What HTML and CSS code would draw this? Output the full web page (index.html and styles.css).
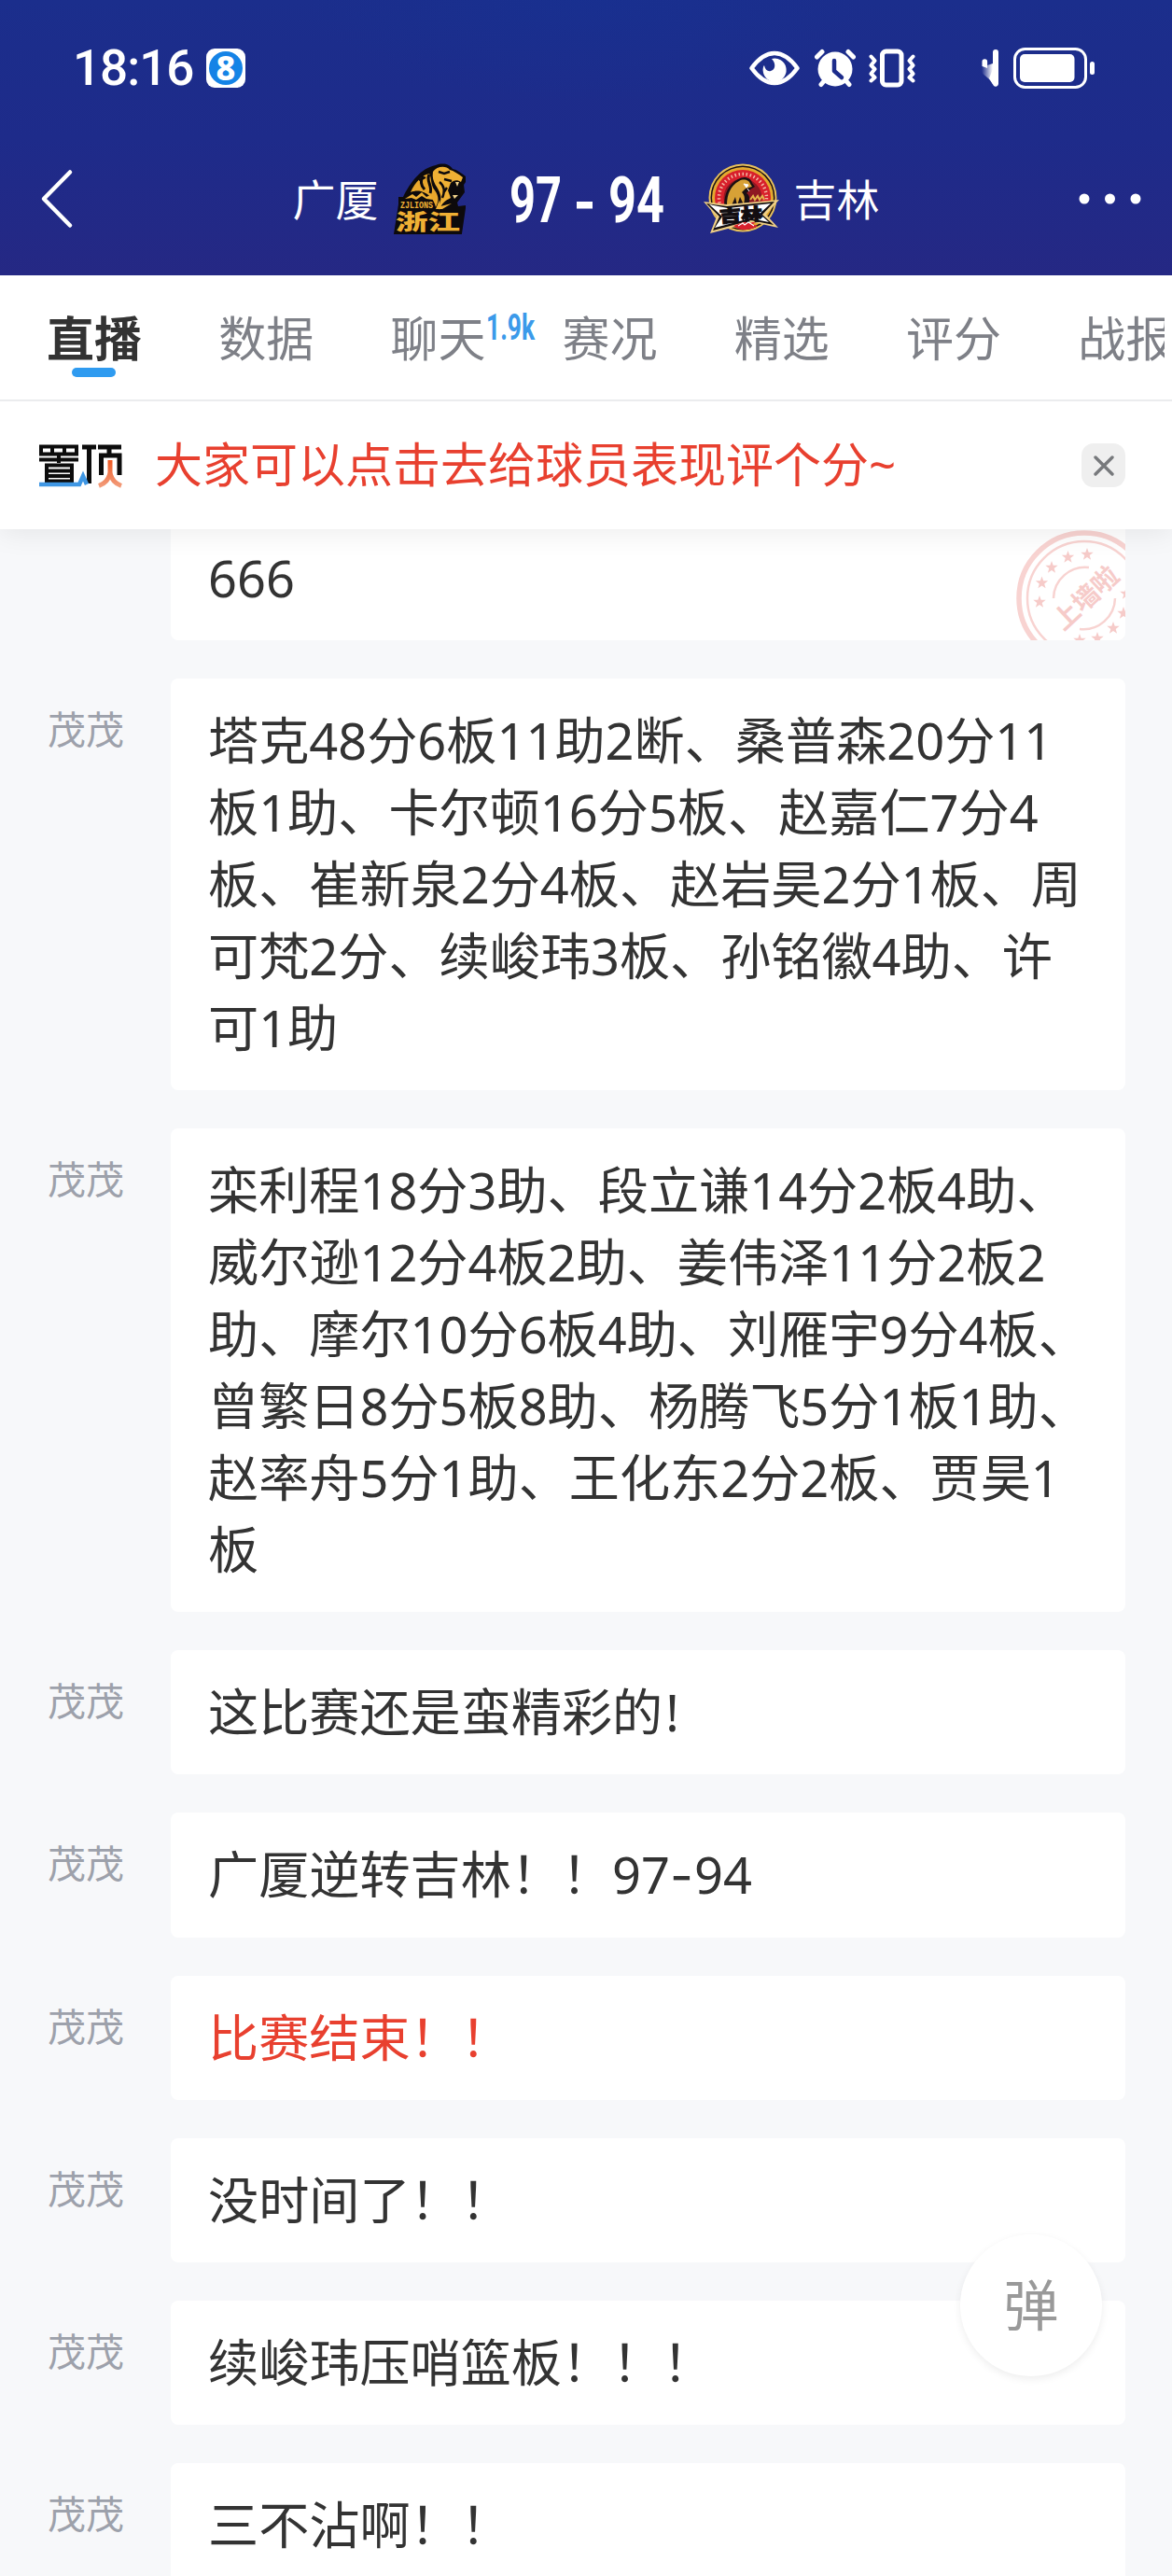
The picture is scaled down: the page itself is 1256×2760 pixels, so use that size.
FILE: index.html
```html
<!DOCTYPE html>
<html lang="zh-CN">
<head>
  <meta charset="UTF-8">
  <title>广厦 97 - 94 吉林</title>
  <meta name="viewport" content="width=device-width, initial-scale=1">
  <link rel="stylesheet" href="styles.css">
</head>
<body>
  <header class="header">
    <div class="status-bar">
      <span class="time">18:16</span>
      <svg class="app-badge" width="42" height="42" viewBox="0 0 42 42">
        <rect width="42" height="42" rx="9" fill="#fff"/>
        <circle cx="21" cy="21" r="18" fill="#1583e6"/>
        <text x="21" y="34" text-anchor="middle" font-family="Noto Sans" font-weight="800" font-size="36" fill="#fff">8</text>
      </svg>
      <div class="status-icons">
        <svg class="eye" width="54" height="38" viewBox="0 0 54 38">
          <path d="M2.500 19C9 10 17 3 27 3s18 7 24.500 16C45 28 37 35 27 35S9 28 2.500 19z" fill="none" stroke="#fff" stroke-width="4.500" stroke-linejoin="round"/>
          <path d="M24 9a12.500 12.500 0 1 1-9 15c-1-4 0-7 1-8 1 5 4 7 7 6 5-1 6-8 1-13z" fill="#fff"/>
        </svg>
        <svg class="alarm" width="44" height="42" viewBox="0 0 44 42">
          <circle cx="22" cy="22" r="18.500" fill="#fff"/>
          <path d="M2.500 9L8 3.500M41.500 9L36 3.500M7 38.500l5-6M37 38.500l-5-6" stroke="#fff" stroke-width="5" stroke-linecap="round"/>
          <path d="M21 13v11l8 7" fill="none" stroke="#1d2c8b" stroke-width="4.500" stroke-linecap="round" stroke-linejoin="round"/>
        </svg>
        <svg class="vibrate" width="50" height="42" viewBox="0 0 50 42">
          <rect x="14.500" y="3" width="20.500" height="36" rx="4" fill="none" stroke="#fff" stroke-width="5"/>
          <path d="M2.500 8.500l4 4.500-4 5 4 4-4 5 4 4-4 3.500M47.500 8.500l-4 4.500 4 5-4 4 4 5-4 4 4 3.500" fill="none" stroke="#fff" stroke-width="4" stroke-linecap="round" stroke-linejoin="round"/>
        </svg>
        <svg class="signal" width="20" height="42" viewBox="0 0 20 42">
          <defs>
            <linearGradient id="fade" x1="0" y1="0" x2="1" y2="0">
              <stop offset="0" stop-color="#fff" stop-opacity="0"/>
              <stop offset="1" stop-color="#fff"/>
            </linearGradient>
          </defs>
          <path d="M1.500 14a2.800 2.800 0 0 1 5.600 0v7l-5.600-2z" fill="#fff"/>
          <path d="M1 20l12-4v22C10 32 3 29 1 25z" fill="url(#fade)"/>
          <path d="M13 4a3 3 0 0 1 6 0v34a3 3 0 0 1-5 2l-5-8 4-10z" fill="#fff"/>
        </svg>
        <svg class="battery" width="88" height="44" viewBox="0 0 88 44">
          <rect x="1.500" y="1.500" width="76" height="41" rx="11" fill="none" stroke="#fff" stroke-width="3"/>
          <rect x="7" y="7" width="58.500" height="30" rx="5" fill="#fff"/>
          <rect x="82" y="15" width="5" height="14" rx="2.500" fill="#fff"/>
        </svg>
      </div>
    </div>
    <div class="match-bar">
      <svg class="back" width="36" height="64" viewBox="0 0 36 64">
        <path d="M32 3.500L4 32l28 28.500" fill="none" stroke="#fff" stroke-width="4.500" stroke-linecap="round" stroke-linejoin="round"/>
      </svg>
      <div class="match">
        <span class="team">广厦</span>
        <svg class="logo logo-home" width="80" height="76" viewBox="0 0 80 76">
          <path d="M7 36h5C20 20 31 5 47 2c8-3 15-1 18 4 5 1 9 4 14 8v6l-2 3 1 8-8 11 1 4 8-1v3l-5 34H1l6-38z" fill="#0d0a0c"/>
          <path d="M20 31C25 19 34 12 40 11c3 5 1 12 6 18 5 7 4 12 1 18-2-9-8-14-16-17-4-1-8 0-11 1z" fill="#e9a72c"/>
          <path d="M44 9c4-6 14-7 18-2 4 1 9 4 14 8l-2 5c-4-3-8-2-11 1l-3 8 3 8c-6 3-10 6-12 13-2-5 3-10 1-16-2-9-10-13-8-25z" fill="#efb034"/>
          <path d="M50 9l6 2 6-2M56 17l8 2M51 20c5 4 6 10 3 17M29 18l7-3M59 26l-4 6" fill="none" stroke="#0d0a0c" stroke-width="2.400"/>
          <path d="M40 12c-4 7 4 12 1 20M34 14c-4 4-3 10 1 14" fill="none" stroke="#0d0a0c" stroke-width="3"/>
          <path d="M64 25l3 8 7-1 1-11-6-2z" fill="#0d0a0c"/>
          <path d="M65 34h6l-4 4zM68 20l2 5 2-5z" fill="#f2d38c"/>
          <path d="M9 50c0-12 6-20 18-20 11 0 18 7 19 18z" fill="#0d0a0c"/>
          <path d="M14 38l8-5 4 3 6-5 5 5 4-2 3 5-7-1-5-3-6 4-5-2z" fill="#efb034"/>
          <path d="M47 49l4-10 1 7 12-3-10 6z" fill="#efb034"/>
          <text x="9" y="48" font-family="Liberation Mono" font-weight="700" font-size="10.500" textLength="35" lengthAdjust="spacingAndGlyphs" fill="#efb034">ZJLIONS</text>
          <text x="4" y="71" class="logo-name" font-size="23" textLength="69" lengthAdjust="spacingAndGlyphs" fill="#efb034">浙江</text>
        </svg>
        <svg class="score" width="168" height="76" viewBox="0 0 168 76">
          <text x="0" y="62.500" textLength="56" lengthAdjust="spacingAndGlyphs">97</text>
          <rect x="72" y="41" width="17" height="7.500" fill="#fff"/>
          <text x="106" y="62.500" textLength="60" lengthAdjust="spacingAndGlyphs">94</text>
        </svg>
        <svg class="logo logo-away" width="82" height="76" viewBox="0 0 82 76">
          <circle cx="42" cy="37" r="36.500" fill="#e8c15a"/>
          <circle cx="42" cy="37" r="34.500" fill="#1a1013"/>
          <circle cx="42" cy="37" r="33" fill="#e3a92f"/>
          <circle cx="42" cy="37" r="30" fill="#d8202c"/>
          <circle cx="42" cy="37" r="25.500" fill="none" stroke="#f4b9a4" stroke-width="3.500" stroke-dasharray="1.500 2.600"/>
          <circle cx="42" cy="37" r="20.500" fill="#8e1822"/>
          <path d="M22 46c0-14 5-24 15-29 6-4 14-2 15 4l3 4-5 3-4 4c5 3 3 9 2 14z" fill="#1a1013"/>
          <path d="M25 45c0-12 4-21 13-26 5-3 11-1 12 3l2 3-7 2-4 4c4 4 3 8 2 13l-4-8-3 9-2-9-4 9z" fill="#d7a136"/>
          <path d="M43 22l5 1-2 3zM47 27l2 3" fill="#fff" stroke="#fff"/>
          <path d="M50 39l3-4 2 4 3-4 2 4 3-4 2 4" fill="none" stroke="#e3b64a" stroke-width="2"/>
          <path d="M0 41l25 3 56-5-14 16 13 14-27-6L7 75l7-18z" fill="#efcf86"/>
          <path d="M3 43l22 3 51-5-13 14 12 11-24-5L10 72l7-15z" fill="#120d10"/>
          <path d="M6 44l20 4 46-5-12 11 10 9-20-4-38 10 8-12z" fill="#fff"/>
          <text x="17" y="62" class="logo-name" font-size="18" textLength="46" lengthAdjust="spacingAndGlyphs" fill="#120d10" stroke="#120d10" stroke-width="1" transform="rotate(-4 40 55)">吉林</text>
          <path d="M32 67l8-3 5-1 13 4c-6 5-20 6-26 0z" fill="#d8202c"/>
          <path d="M37 67l5-3 2 2 4-3 6 4" fill="none" stroke="#fff" stroke-width="1.200"/>
        </svg>
        <span class="team">吉林</span>
      </div>
      <svg class="more" width="68" height="14" viewBox="0 0 68 14">
        <circle cx="6" cy="7" r="5.500" fill="#fff"/>
        <circle cx="33.500" cy="7" r="5.500" fill="#fff"/>
        <circle cx="61" cy="7" r="5.500" fill="#fff"/>
      </svg>
    </div>
  </header>

  <nav class="tabs">
    <a class="tab active">直播</a>
    <a class="tab">数据</a>
    <a class="tab">聊天<svg class="count" width="56" height="36" viewBox="0 0 56 36"><text x="0" y="32" textLength="52" lengthAdjust="spacingAndGlyphs">1.9k</text></svg></a>
    <a class="tab">赛况</a>
    <a class="tab">精选</a>
    <a class="tab">评分</a>
    <a class="tab">战报</a>
  </nav>

  <div class="pinned">
    <svg class="pin-logo" width="92" height="48" viewBox="0 0 92 48">
      <defs>
        <linearGradient id="orange" x1="0" y1="0" x2="0" y2="1">
          <stop offset="0" stop-color="#ee5a24"/>
          <stop offset="1" stop-color="#f29a78"/>
        </linearGradient>
      </defs>
      <g fill="none" stroke="#0c0c0c" stroke-width="4">
        <path d="M3 3.500h38v8H3zM15 3v8M28 3v8M1 17.500h42M22 11v10M9 43V23.500h27V43M9 29.500h27M9 35h27M9 40.500h27"/>
        <path stroke-width="5" d="M47 4h15M54.500 4v39M64 4h25M76 4v8M67.500 34V13h19.500v21"/>
      </g>
      <path d="M1 44h43l4-9 4 9" fill="none" stroke="#3f97e4" stroke-width="4.500"/>
      <path d="M77 18v13c-1 7-5 12-12 14.500M77 31c1 7 5 12 12 14.500" fill="none" stroke="url(#orange)" stroke-width="5"/>
    </svg>
    <span class="pin-text">大家可以点击去给球员表现评个分~</span>
    <span class="close">
      <svg width="22" height="22" viewBox="0 0 22 22"><path d="M2 2l18 18M20 2L2 20" stroke="#77797c" stroke-width="3.400" stroke-linecap="round"/></svg>
    </span>
  </div>

  <main class="feed">
    <div class="row">
      <span class="name"></span>
      <div class="bubble walled">666
        <svg class="stamp" width="120" height="119" viewBox="0 0 120 119">
          <defs>
            <path id="star" d="M0-7l1.700 4.700 5 .1-4 3.100 1.400 4.800L0 2.900l-4.100 2.800 1.400-4.800-4-3.100 5-.1z"/>
          </defs>
          <g fill="none" stroke="#f8d3d1">
            <circle cx="76" cy="74" r="70" stroke-width="5.500"/>
            <circle cx="76" cy="74" r="61" stroke-width="2.500"/>
            <path d="M43 74a34 34 0 0 1 38-33M109 74a34 34 0 0 1-38 33" stroke-width="2.500"/>
          </g>
          <g fill="#f6cbc9">
            <use href="#star" x="79" y="27"/>
            <use href="#star" x="58.500" y="30"/>
            <use href="#star" x="41" y="41"/>
            <use href="#star" x="30.500" y="57.500"/>
            <use href="#star" x="28" y="78"/>
            <use href="#star" x="107" y="106"/>
            <use href="#star" x="118" y="90"/>
            <use href="#star" x="121" y="69"/>
            <use href="#star" x="90" y="117"/>
            <use href="#star" x="71" y="119"/>
            <text x="77" y="84" class="stamp-text" text-anchor="middle" transform="rotate(-43 77 73)">上墙啦</text>
          </g>
        </svg>
      </div>
    </div>
    <div class="row">
      <span class="name">茂茂</span>
      <div class="bubble">塔克48分6板11助2断、桑普森20分11<br>板1助、卡尔顿16分5板、赵嘉仁7分4<br>板、崔新泉2分4板、赵岩昊2分1板、周<br>可梵2分、续峻玮3板、孙铭徽4助、许<br>可1助</div>
    </div>
    <div class="row">
      <span class="name">茂茂</span>
      <div class="bubble">栾利程18分3助、段立谦14分2板4助、<br>威尔逊12分4板2助、姜伟泽11分2板2<br>助、摩尔10分6板4助、刘雁宇9分4板、<br>曾繁日8分5板8助、杨腾飞5分1板1助、<br>赵率舟5分1助、王化东2分2板、贾昊1<br>板</div>
    </div>
    <div class="row">
      <span class="name">茂茂</span>
      <div class="bubble">这比赛还是蛮精彩的<span class="mark">!</span></div>
    </div>
    <div class="row">
      <span class="name">茂茂</span>
      <div class="bubble">广厦逆转吉林！！97<span class="dash">-</span>94</div>
    </div>
    <div class="row">
      <span class="name">茂茂</span>
      <div class="bubble key">比赛结束！！</div>
    </div>
    <div class="row">
      <span class="name">茂茂</span>
      <div class="bubble">没时间了！！</div>
    </div>
    <div class="row">
      <span class="name">茂茂</span>
      <div class="bubble">续峻玮压哨篮板！！！</div>
    </div>
    <div class="row">
      <span class="name">茂茂</span>
      <div class="bubble">三不沾啊！！</div>
    </div>
  </main>

  <button class="danmu" type="button">弹</button>
</body>
</html>
```
FILE: styles.css
```css
* { box-sizing: border-box; }
body { margin: 0; height: 2760px; overflow: hidden; display: flex; flex-direction: column; background: #f7f8fa; color: #333; font-family: "Noto Sans", "Noto Sans CJK SC", sans-serif; }
svg { display: block; flex: none; }

/* header */
.header { flex: none; height: 295px; color: #fff; background: radial-gradient(ellipse 300px 110px at 628px 0, #15329466, #15329400), linear-gradient(#1b2e8c, #1e2b8a 50%, #252884); }
.status-bar { display: flex; align-items: center; height: 146px; padding: 0 82px 0 78px; }
.time { font-family: Roboto, sans-serif; font-weight: 500; font-size: 53px; letter-spacing: -1px; line-height: 66px; }
.app-badge { margin-left: 14px; overflow: visible; }
.status-icons { display: flex; align-items: center; margin-left: auto; }
.alarm { margin-left: 16px; }
.vibrate { margin-left: 14px; }
.signal { margin-left: 70px; }
.battery { margin-left: 15px; }
.match-bar { display: flex; align-items: center; justify-content: space-between; height: 134px; padding: 0 32px 0 43px; }
.match { display: flex; align-items: center; margin-left: 21px; }
.team { padding-bottom: 5px; font-family: "Noto Sans CJK SC", sans-serif; font-size: 46px; line-height: 68px; }
.logo-home { margin-left: 14px; }
.logo-away { margin: 0 15px 0 40px; }
.logo-name { font-family: "Noto Sans CJK SC", sans-serif; font-weight: 900; }
.score { margin-left: 46px; overflow: visible; fill: #fff; font-family: Roboto, sans-serif; font-weight: 700; font-size: 69px; }

/* tabs */
.tabs { flex: none; display: flex; width: 1248px; height: 133px; padding-left: 50px; overflow: hidden; box-shadow: 8px 0 #fff; background: #fff; }
.tab { position: relative; flex: none; width: 184.2px; padding-top: 28px; font-family: "Noto Sans CJK SC", sans-serif; font-size: 51px; line-height: 74px; color: #7e8087; white-space: nowrap; }
.tab.active { font-weight: 700; color: #333; }
.tab.active::after { content: ""; display: block; width: 47px; height: 10px; margin: -3px 0 0 27px; border-radius: 5px; background: #2f9bf0; }
.count { position: absolute; left: 103px; top: 37px; overflow: visible; font-family: Roboto, sans-serif; font-weight: 700; font-size: 38px; fill: #3b9aea; }

/* pinned message, the shadow only falls down on the feed */
.pinned { position: relative; flex: none; display: flex; align-items: center; height: 139px; padding: 0 50px 0 41px; border-top: 2px solid #ebecee; background: #fff; box-shadow: 0 4px 28px #00000014; clip-path: inset(0 0 -40px 0); z-index: 1; }
.pin-text { margin-left: 33px; padding-bottom: 3px; font-size: 51px; line-height: 76px; color: #e8402f; white-space: nowrap; }
.close { display: flex; align-items: center; justify-content: center; width: 47px; height: 47px; margin-left: auto; border-radius: 13px; background: #efefef; }

/* live feed */
.feed { flex: 1; min-height: 0; display: flex; flex-direction: column; gap: 41px; padding: 0 50px 0 51px; overflow: hidden; }
.row { flex: none; display: flex; }
.row:first-child { margin-top: -14px; }
.name { flex: none; width: 132px; padding-top: 24px; font-size: 41px; line-height: 60px; color: #9da1ab; }
.bubble { position: relative; flex: 1; padding: 28px 0 28px 40px; border-radius: 8px; background: #fff; font-size: 54.15px; line-height: 77px; white-space: nowrap; }
.bubble.key { color: #e8402f; }
.walled { height: 133px; overflow: hidden; }
.stamp { position: absolute; right: 0; bottom: 0; }
.stamp-text { font-family: "Noto Sans CJK SC", sans-serif; font-weight: 700; font-size: 28px; }
.dash { font-family: Inter, sans-serif; letter-spacing: 1px; }
.mark { margin-left: 3px; }

.danmu { position: absolute; left: 1029px; top: 2394px; width: 152px; height: 152px; padding: 0 0 6px; border: none; border-radius: 50%; background: #fff; box-shadow: 0 3px 8px #00000012; font-family: "Noto Sans CJK SC", sans-serif; font-size: 59px; line-height: 146px; color: #999; z-index: 3; }
```
